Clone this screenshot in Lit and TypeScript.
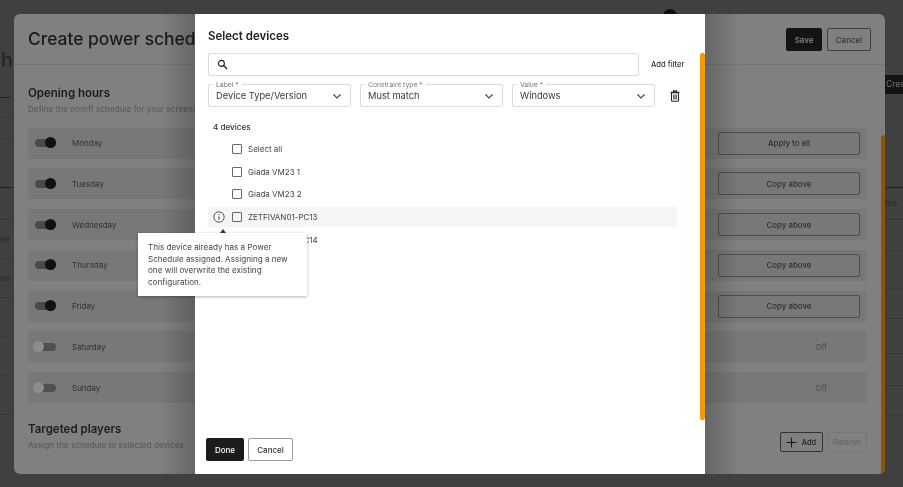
import { LitElement, html, css } from 'lit';
import { customElement } from 'lit/decorators.js';

const chevron = html`<svg class="chev" viewBox="0 0 12 12" width="12" height="12"><path d="M2.5 4.5 6 8l3.5-3.5" fill="none" stroke="#444" stroke-width="1.1"/></svg>`;

const days = [
  { name: 'Monday', on: true, action: 'Apply to all' },
  { name: 'Tuesday', on: true, action: 'Copy above' },
  { name: 'Wednesday', on: true, action: 'Copy above' },
  { name: 'Thursday', on: true, action: 'Copy above' },
  { name: 'Friday', on: true, action: 'Copy above' },
  { name: 'Saturday', on: false, action: '' },
  { name: 'Sunday', on: false, action: '' },
];

const devices = ['Select all', 'Giada VM23 1', 'Giada VM23 2', 'ZETFIVAN01-PC13', 'ZETFIVAN01-PC14'];

// rules of the page table that peek out on both sides of the panel
const leftLines = [117, 138, 219, 258, 297, 336, 375, 414];
const rightLines = [219, 250, 288, 318, 353, 385, 415];

@customElement('app-root')
export class AppRoot extends LitElement {
  static styles = css`
    :host {
      display: block;
      width: 903px;
      height: 487px;
      font-family: Inter, 'Liberation Sans', sans-serif;
      color: #222;
    }

    .page {
      position: relative;
      width: 903px;
      height: 487px;
      overflow: hidden;
      background: #404040;
      filter: blur(0.3px);
    }

    /* what is left of the page behind the scrim */
    .behind {
      position: absolute;
      color: #262626;
      white-space: nowrap;
    }
    .behind.title { left: 0; top: 48px; font-size: 20px; font-weight: 500; width: 13px; overflow: hidden; direction: rtl; }
    .behind.small { font-size: 8.5px; color: #2a2a2a; }
    .behind.line { height: 1px; background: #393939; }
    .behind.line.dark { background: #222; }
    .behind.avatar { left: 663px; top: 9px; width: 14px; height: 14px; border-radius: 50%; background: #111; }
    .behind.create {
      left: 885px;
      top: 75px;
      width: 18px;
      height: 19px;
      background: #141414;
      color: #777;
      font-size: 8.5px;
      line-height: 19px;
      padding-left: 1px;
      box-sizing: border-box;
      overflow: hidden;
    }

    .panel {
      position: absolute;
      left: 14px;
      top: 14px;
      width: 871px;
      height: 460px;
      box-sizing: border-box;
      background: #808080;
      border-radius: 6px;
      overflow: hidden;
      display: flex;
      flex-direction: column;
    }
    .panel-head {
      flex: none;
      height: 51px;
      box-sizing: border-box;
      border-bottom: 1px solid #747474;
      padding: 14px 14px 0;
      display: flex;
      justify-content: space-between;
    }
    .panel-head h1 {
      margin: -1px 0 0;
      font-size: 17.4px;
      line-height: 24px;
      font-weight: 500;
      color: #1a1a1a;
    }
    .head-actions { display: flex; gap: 5px; }
    .head-btn {
      height: 23px;
      box-sizing: border-box;
      border-radius: 2px;
      font-size: 8px;
      font-weight: 500;
      display: flex;
      align-items: center;
      justify-content: center;
    }
    .head-btn.save { width: 36px; background: #141414; color: #8c8c8c; }
    .head-btn.cancel { width: 44px; border: 1px solid #3f3f3f; color: #333; }

    .panel-body { flex: 1; padding: 20px 14px 0; display: flex; flex-direction: column; min-height: 0; }
    .panel h2 { margin: 0; font-size: 11.5px; line-height: 16px; font-weight: 600; color: #1c1c1c; }
    .panel p { margin: 2px 0 0; font-size: 8px; line-height: 12px; color: #555; letter-spacing: 0.1px; }

    .rows { display: flex; flex-direction: column; gap: 9.75px; margin-top: 12.6px; margin-right: 4px; }
    .row {
      height: 31px;
      background: #787878;
      border-radius: 2px;
      display: flex;
      align-items: center;
      padding: 0 7px;
    }
    .switch { position: relative; width: 21px; height: 8px; border-radius: 4px; background: #4a4a4a; flex: none; }
    .switch i {
      position: absolute;
      top: -2px;
      right: 0;
      width: 11px;
      height: 11px;
      border-radius: 50%;
      background: #111;
    }
    .switch.off { background: #505050; }
    .switch.off i { left: -2px; right: auto; background: #8c8c8c; }
    .day { margin-left: 16px; flex: 1; font-size: 8px; color: #303030; }
    .action {
      width: 142px;
      height: 23px;
      box-sizing: border-box;
      border: 1px solid #4d4d4d;
      border-radius: 2px;
      font-size: 7.9px;
      font-weight: 500;
      color: #2e2e2e;
      display: flex;
      align-items: center;
      justify-content: center;
    }
    .off-label { padding-right: 33px; font-size: 8px; color: #4c4c4c; }

    .targets { display: flex; justify-content: space-between; margin-top: 18px; }
    .targets-actions { display: flex; gap: 4.5px; align-items: flex-start; margin-top: 11px; margin-right: 4px; }
    .add {
      width: 43px;
      height: 20px;
      box-sizing: border-box;
      border: 1px solid #333;
      border-radius: 2px;
      display: flex;
      align-items: center;
      justify-content: center;
      gap: 5px;
      font-size: 7.4px;
      font-weight: 500;
      color: #222;
    }
    .remove {
      width: 40px;
      height: 20px;
      box-sizing: border-box;
      border: 1px solid #767676;
      border-radius: 2px;
      display: flex;
      align-items: center;
      justify-content: center;
      font-size: 7.5px;
      color: #5f5f5f;
    }
    .panel-bar {
      position: absolute;
      right: 0;
      top: 121px;
      bottom: 0;
      width: 4px;
      border-radius: 2px;
      background: #8a5706;
    }

    .shade {
      position: absolute;
      left: 160px;
      top: 14px;
      width: 580px;
      height: 460px;
      background: linear-gradient(90deg, transparent, rgba(0, 0, 0, 0.2) 6%, rgba(0, 0, 0, 0.2) 94%, transparent);
    }

    .dialog {
      position: absolute;
      left: 195px;
      top: 14px;
      width: 510px;
      height: 460px;
      box-sizing: border-box;
      background: #fff;
      padding: 13px;
      display: flex;
      flex-direction: column;
    }
    .dialog h3 { margin: 1px 0 0; font-size: 11.5px; line-height: 17px; font-weight: 600; color: #222; }
    .search-row { display: flex; align-items: center; margin-top: 8px; }
    .search {
      width: 431px;
      height: 23px;
      box-sizing: border-box;
      border: 1px solid #dcdcdc;
      border-radius: 2px;
      display: flex;
      align-items: center;
      padding-left: 8px;
    }
    .add-filter { margin-left: 12px; font-size: 7.6px; font-weight: 500; color: #333; }
    .filters { display: flex; align-items: center; gap: 9px; margin-top: 8px; }
    .field {
      position: relative;
      width: 143px;
      height: 23px;
      box-sizing: border-box;
      border: 1px solid #dcdcdc;
      border-radius: 2px;
      display: flex;
      align-items: center;
      justify-content: space-between;
      padding: 0 7px;
      font-size: 9.3px;
      color: #3a3a3a;
    }
    .field label {
      position: absolute;
      left: 4px;
      top: -5px;
      padding: 0 3px;
      background: #fff;
      font-size: 6.8px;
      line-height: 9px;
      color: #777;
    }
    .trash { margin-left: 5px; display: flex; }
    .count { margin: 14px 0 0 5px; font-size: 8.1px; line-height: 12px; font-weight: 500; color: #333; }
    .devices { display: flex; flex-direction: column; gap: 2.7px; margin-top: 6px; width: 469px; }
    .device {
      position: relative;
      height: 20px;
      display: flex;
      align-items: center;
      padding-left: 24px;
      font-size: 8px;
      color: #444;
    }
    .device.hover { background: #f5f5f5; }
    .box { width: 8px; height: 8px; border: 1px solid #666; border-radius: 1px; margin-right: 6px; flex: none; }
    .info { position: absolute; left: 5px; top: 4px; }
    .dialog-foot { margin-top: auto; display: flex; gap: 4px; margin-left: -2px; }
    .done, .dialog-cancel {
      height: 23px;
      box-sizing: border-box;
      border-radius: 2px;
      font-size: 8px;
      font-weight: 500;
      display: flex;
      align-items: center;
      justify-content: center;
    }
    .done { width: 38px; background: #1c1c1c; color: #fff; }
    .dialog-cancel { width: 45px; border: 1px solid #999; color: #333; }
    .dialog-bar {
      position: absolute;
      right: 0;
      top: 39px;
      width: 5px;
      height: 367px;
      border-radius: 2px;
      background: #f59a00;
    }

    .tooltip {
      position: absolute;
      left: 138px;
      top: 233px;
      width: 169px;
      height: 63px;
      box-sizing: border-box;
      background: #fff;
      box-shadow: 0 1px 3px rgba(0, 0, 0, 0.3);
      padding: 9px 10px;
      font-size: 8.1px;
      line-height: 11.5px;
      color: #444;
    }
    .tooltip::before {
      content: '';
      position: absolute;
      left: 82px;
      top: -4px;
      border-left: 3px solid transparent;
      border-right: 3px solid transparent;
      border-bottom: 4px solid #333;
    }
  `;

  render() {
    return html`
      <div class="page">
        <div class="behind avatar"></div>
        <div class="behind title">ch</div>
        <div class="behind line dark" style="left:0;top:97px;width:10px"></div>
        <div class="behind line dark" style="left:0;top:187px;width:14px"></div>
        <div class="behind line dark" style="left:885px;top:187px;width:18px"></div>
        ${leftLines.map(y => html`<div class="behind line" style="left:0;top:${y}px;width:14px"></div>`)}
        ${rightLines.map(y => html`<div class="behind line" style="left:885px;top:${y}px;width:18px"></div>`)}
        <div class="behind small" style="left:885px;top:198px">tus</div>
        <div class="behind small" style="left:0;top:234px">ne</div>
        <div class="behind small" style="left:0;top:273px">ne</div>
        <div class="behind create">Creat</div>

        <section class="panel">
          <header class="panel-head">
            <h1>Create power schedule</h1>
            <div class="head-actions">
              <div class="head-btn save">Save</div>
              <div class="head-btn cancel">Cancel</div>
            </div>
          </header>
          <div class="panel-body">
            <h2>Opening hours</h2>
            <p>Define the on/off schedule for your screens</p>
            <div class="rows">
              ${days.map(d => html`
                <div class="row">
                  <span class="switch ${d.on ? '' : 'off'}"><i></i></span>
                  <span class="day">${d.name}</span>
                  ${d.on
                    ? html`<span class="action">${d.action}</span>`
                    : html`<span class="off-label">Off</span>`}
                </div>
              `)}
            </div>
            <div class="targets">
              <div>
                <h2>Targeted players</h2>
                <p>Assign the schedule to selected devices</p>
              </div>
              <div class="targets-actions">
                <div class="add">
                  <svg viewBox="0 0 10 10" width="11" height="11"><path d="M5 .5v9M.5 5h9" stroke="#1a1a1a" stroke-width="1" fill="none"/></svg>
                  Add
                </div>
                <div class="remove">Remove</div>
              </div>
            </div>
          </div>
          <div class="panel-bar"></div>
        </section>

        <div class="shade"></div>

        <section class="dialog">
          <h3>Select devices</h3>
          <div class="search-row">
            <div class="search">
              <svg viewBox="0 0 12 12" width="11" height="11"><circle cx="4.8" cy="4.8" r="3.2" fill="none" stroke="#222" stroke-width="1.3"/><path d="M7.2 7.2 11 11" stroke="#222" stroke-width="1.5"/></svg>
            </div>
            <span class="add-filter">Add filter</span>
          </div>
          <div class="filters">
            <div class="field"><label>Label *</label>Device Type/Version ${chevron}</div>
            <div class="field"><label>Constraint type *</label>Must match ${chevron}</div>
            <div class="field"><label>Value *</label>Windows ${chevron}</div>
            <span class="trash">
              <svg viewBox="0 0 12 12" width="12" height="12"><path d="M1.5 2.2h9M4.5 2V.9h3V2" fill="none" stroke="#222" stroke-width="1.1"/><rect x="2.5" y="2.6" width="7" height="8.6" rx="0.6" fill="none" stroke="#222" stroke-width="1.1"/><path d="M4.9 4.4v5M7.1 4.4v5" stroke="#222" stroke-width="1.2"/></svg>
            </span>
          </div>
          <div class="count">4 devices</div>
          <div class="devices">
            ${devices.map((d, i) => html`
              <div class="device ${i === 3 ? 'hover' : ''}">
                ${i === 3 ? html`<svg class="info" viewBox="0 0 12 12" width="12" height="12"><circle cx="6" cy="6" r="5.2" fill="none" stroke="#444" stroke-width="0.9"/><path d="M6 5.2v3.6" stroke="#444" stroke-width="1"/><circle cx="6" cy="3.5" r="0.6" fill="#444"/></svg>` : ''}
                <span class="box"></span>${d}
              </div>
            `)}
          </div>
          <div class="dialog-foot">
            <div class="done">Done</div>
            <div class="dialog-cancel">Cancel</div>
          </div>
          <div class="dialog-bar"></div>
        </section>

        <div class="tooltip">This device already has a Power Schedule assigned. Assigning a new one will overwrite the existing configuration.</div>
      </div>
    `;
  }
}
